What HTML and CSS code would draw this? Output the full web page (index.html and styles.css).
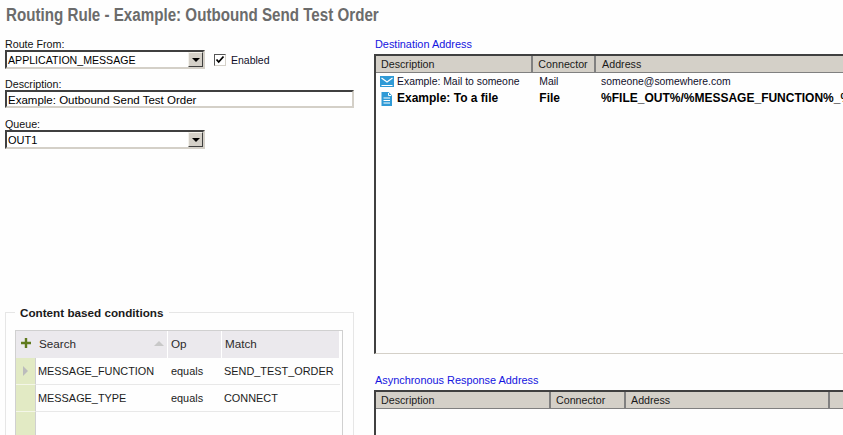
FILE: index.html
```html
<!DOCTYPE html>
<html lang="en">
<head>
<meta charset="utf-8">
<title>Routing Rule</title>
<link rel="stylesheet" href="styles.css">
</head>
<body>
<h1 class="title">Routing Rule - Example: Outbound Send Test Order</h1>
<div class="main">
  <section class="left">
    <div class="from-row">
      <div class="field">
        <label class="label">Route From:</label>
        <div class="combo"><span class="combo-text">APPLICATION_MESSAGE</span><span class="combo-btn"><i class="arrow"></i></span></div>
      </div>
      <div class="enabled">
        <span class="check"><svg width="10" height="10" viewBox="0 0 10 10"><path d="M1.500 4.500l2.200 2.500L8.500 1.500" fill="none" stroke="#000" stroke-width="1.800"/></svg></span>
        <span>Enabled</span>
      </div>
    </div>
    <div class="field gap">
      <label class="label">Description:</label>
      <div class="textbox">Example: Outbound Send Test Order</div>
    </div>
    <div class="field gap gap-queue">
      <label class="label">Queue:</label>
      <div class="combo"><span class="combo-text">OUT1</span><span class="combo-btn"><i class="arrow"></i></span></div>
    </div>
    <div class="conditions">
      <div class="legend">Content based conditions</div>
      <div class="grid">
        <div class="g-head">
          <div class="g-add"><svg width="12" height="12" viewBox="0 0 12 12"><path d="M1 6h10M6 1v10" stroke="#5f7a1e" stroke-width="2.400"/></svg></div>
          <div class="g-h c-search">Search<i class="sort"></i></div>
          <div class="g-h c-op">Op</div>
          <div class="g-h c-match">Match</div>
        </div>
        <div class="g-row">
          <div class="g-side"><i class="pointer"></i></div>
          <div class="g-c c-search">MESSAGE_FUNCTION</div>
          <div class="g-c c-op">equals</div>
          <div class="g-c c-match">SEND_TEST_ORDER</div>
        </div>
        <div class="g-row">
          <div class="g-side"></div>
          <div class="g-c c-search">MESSAGE_TYPE</div>
          <div class="g-c c-op">equals</div>
          <div class="g-c c-match">CONNECT</div>
        </div>
        <div class="g-rest"><div class="g-side"></div></div>
      </div>
    </div>
  </section>
  <section class="right">
    <div class="list-title">Destination Address</div>
    <div class="list list-dest">
      <div class="l-head">
        <div class="lh w-d1">Description</div>
        <div class="lh w-c1">Connector</div>
        <div class="lh w-a1">Address</div>
      </div>
      <div class="l-row">
        <div class="lc w-d1 with-icon">
          <svg class="ico" width="14" height="11" viewBox="0 0 14 11"><rect width="14" height="11" fill="#2f9ad6"/><path d="M1.500 2l5.500 4 5.500-4M1.500 9.500h11" fill="none" stroke="#fff" stroke-width="1.200"/></svg>
          Example: Mail to someone
        </div>
        <div class="lc w-c1">Mail</div>
        <div class="lc w-a1">someone@somewhere.com</div>
      </div>
      <div class="l-row bold">
        <div class="lc w-d1 with-icon">
          <svg class="ico" width="14" height="14" viewBox="0 0 14 14"><path d="M1.500 0h7l3.500 3.500V14H1.500z" fill="#2f9ad6"/><path d="M8.500 1v2.500H11" fill="none" stroke="#fff"/><path d="M3.500 6h6.500M3.500 8.500h6.500M3.500 11h6.500" stroke="#fff" stroke-width="1"/></svg>
          Example: To a file
        </div>
        <div class="lc w-c1">File</div>
        <div class="lc w-a1">%FILE_OUT%/%MESSAGE_FUNCTION%_%</div>
      </div>
    </div>
    <div class="list-title second">Asynchronous Response Address</div>
    <div class="list list-async">
      <div class="l-head">
        <div class="lh w-d2">Description</div>
        <div class="lh w-c2">Connector</div>
        <div class="lh w-a2">Address</div>
        <div class="lh w-e2"></div>
      </div>
    </div>
  </section>
</div>
</body>
</html>
```
FILE: styles.css
```css
* { box-sizing: border-box; }
html, body { margin: 0; height: 100%; }
body {
  width: 843px;
  height: 435px;
  overflow: hidden;
  background: #fefefe;
  color: #000;
  font: 10.700px/14px "Liberation Sans", Arial, sans-serif;
  display: flex;
  flex-direction: column;
}
.title {
  margin: 0;
  height: 32px;
  padding: 3px 0 0 6px;
  flex: none;
  font: bold 18px/24px "Liberation Sans", sans-serif;
  color: #6b6b6b;
  white-space: nowrap;
  transform: scaleX(0.842);
  transform-origin: 6px 0;
}
.main { flex: 1; display: flex; min-height: 0; }
.left { width: 374px; flex: none; padding: 6px 0 0 5px; display: flex; flex-direction: column; }
.right { flex: 1; min-width: 0; display: flex; flex-direction: column; padding-top: 6px; overflow: hidden; }
.from-row { display: flex; align-items: flex-end; }
.field { display: flex; flex-direction: column; }
.gap { margin-top: 9px; width: 349px; }
.gap-queue { margin-top: 10px; }
.label { height: 12px; line-height: 13px; color: #111; white-space: nowrap; }
.combo {
  width: 200px; height: 19px;
  display: flex; align-items: stretch;
  border: 2px solid; border-color: #404040 #d4d0c8 #d4d0c8 #404040;
  background: #fff;
}
.combo-text { flex: 1; padding-left: 1px; line-height: 16px; white-space: nowrap; font-size: 11px; }
.from-row .combo-text { font-size: 10.600px; }
.combo-btn {
  width: 15px;
  background: #d4d0c8;
  border: 1px solid; border-color: #f4f2ec #404040 #404040 #f4f2ec;
  display: flex; align-items: center; justify-content: center;
}
.arrow { width: 0; height: 0; border: 4px solid transparent; border-top-color: #000; border-bottom: 0; }
.enabled { display: flex; align-items: center; gap: 5px; margin: 0 0 3px 9px; height: 13px; font-size: 10.500px; color: #10102a; }
.check {
  width: 12px; height: 12px; display: flex; align-items: center; justify-content: center;
  border: 1px solid; border-color: #555 #d4d0c8 #d4d0c8 #555; background: #fff;
}
.textbox {
  height: 18px; padding-left: 1px; line-height: 16px; white-space: nowrap; font-size: 11.500px;
  border: 2px solid; border-color: #404040 #d4d0c8 #d4d0c8 #404040; background: #fff;
}
.conditions {
  margin-top: 163px;
  width: 349px;
  flex: 1;
  border: 1px solid #e6e6e6;
  border-bottom: 0;
  padding: 17px 10px 0 9px;
  position: relative;
}
.legend {
  position: absolute; left: 9px; top: -7px; padding: 0 5px;
  background: #fefefe; font-weight: bold; font-size: 11.700px; line-height: 14px; color: #1a1a1a;
}
.grid { height: 100%; border: 1px solid #d0d0d0; border-bottom: 0; display: flex; flex-direction: column; padding-right: 2px; }
.g-head { height: 27px; flex: none; display: flex; background: #ebe9ed; color: #2b2b2b; font-size: 11.700px; }
.g-add { width: 20px; display: flex; align-items: center; justify-content: center; padding: 0 0 4px; }
.g-h { line-height: 26px; padding-left: 3px; border-right: 1px solid #fff; position: relative; }
.g-h:last-child { border-right: 1px solid #fff; }
.c-search { width: 132px; flex: none; }
.c-op { width: 54px; flex: none; }
.c-match { flex: 1; }
.sort { position: absolute; right: 3px; top: 10px; width: 0; height: 0; border: 5px solid transparent; border-bottom-color: #c8c8c8; border-top: 0; }
.g-row { height: 27px; flex: none; display: flex; border-bottom: 1px solid #e8e8e8; color: #1c1c1c; }
.g-side { width: 20px; flex: none; background: #e2eac4; border-right: 1px solid #d0d0d0; display: flex; align-items: center; justify-content: center; }
.g-row .g-side { border-bottom: 1px solid #f4f6e8; margin-bottom: -1px; }
.g-c { line-height: 27px; padding-left: 2px; white-space: nowrap; font-size: 10.900px; }
.g-row .c-op { padding-left: 3px; }
.g-row .c-match { padding-left: 2px; }
.g-rest { flex: 1; display: flex; }
.pointer { width: 0; height: 0; border: 5px solid transparent; border-left-color: #bcbcbc; border-right: 0; }
.list-title { height: 12px; line-height: 12px; padding-left: 1px; color: #1414e0; white-space: nowrap; font-size: 10.900px; }
.second { margin-top: 20px; }
.list {
  width: 480px; margin-top: 4px;
  border-left: 2px solid #404040; border-top: 2px solid #404040; border-bottom: 1px solid #d4d0c8;
}
.list-dest { height: 300px; flex: none; }
.list-async { flex: 1; border-bottom: 0; margin-top: 4px; }
.l-head { display: flex; height: 16px; background: #d4d0c8; box-shadow: 0 1px 0 #808080; }
.lh { line-height: 16px; padding-left: 5px; border-right: 2px solid #808080; white-space: nowrap; color: #1a1a1a; overflow: hidden; }
.l-row { display: flex; height: 17px; line-height: 17px; white-space: nowrap; color: #10102a; font-size: 10.400px; }
.l-head + .l-row { margin-top: 1px; }
.bold { font-weight: bold; color: #000; font-size: 12px; }
.lc { padding-left: 6px; overflow: hidden; }
.w-a1.lc { padding-left: 5px; }
.lh.w-a1 { padding-left: 6px; }
.with-icon { display: flex; align-items: center; gap: 3px; padding-left: 4px; }
.ico { flex: none; }
.w-d1 { width: 158px; }
.w-c1 { width: 63px; }
.w-a1 { width: 259px; }
.w-d2 { width: 175px; }
.w-c2 { width: 75px; }
.w-a2 { width: 204px; }
.w-e2 { flex: 1; border-right: 0; }
```
